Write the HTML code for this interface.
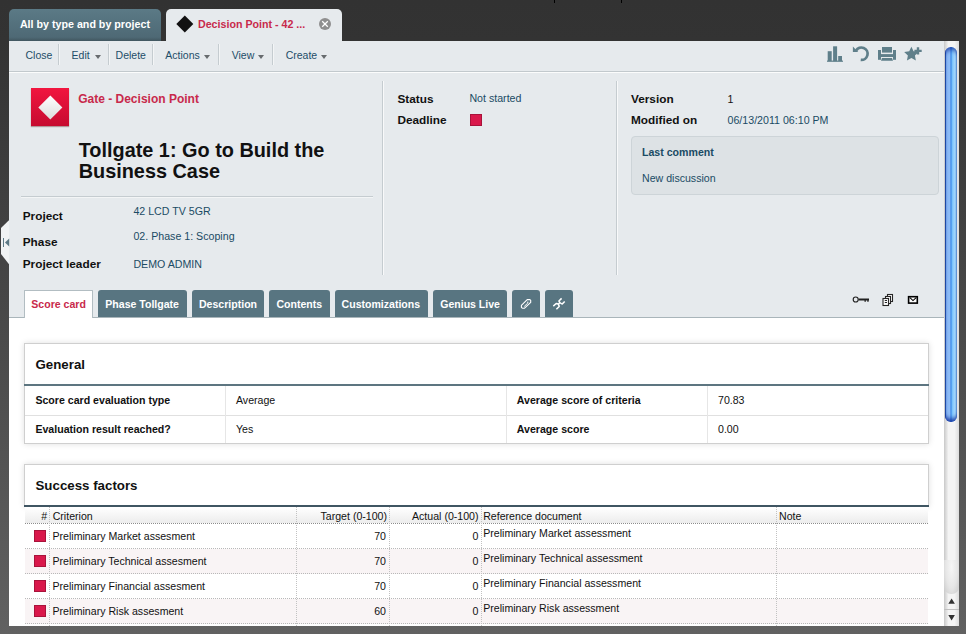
<!DOCTYPE html>
<html><head><meta charset="utf-8">
<style>
*{margin:0;padding:0;box-sizing:border-box}
html,body{width:966px;height:634px;overflow:hidden}
body{position:relative;font-family:"Liberation Sans",sans-serif;background:linear-gradient(#323232 0,#333333 41px,#616161 634px);}
.a{position:absolute;white-space:nowrap;line-height:1}
.b{font-weight:bold}
.lk{color:#1a4b64}
#tab1{left:9px;top:9px;width:152px;height:32px;border-radius:5px 5px 0 0;background:linear-gradient(#5b7a86,#4e6975 88%,#41565f)}
#tab2{left:166px;top:9px;width:176px;height:32px;border-radius:5px 5px 0 0;background:#e6eaed}
#toolbar{left:9px;top:41px;width:935px;height:31px;background:#e6eaed;border-bottom:1px solid #c2c9cd}
#header{left:9px;top:72px;width:935px;height:246px;background:#e6eaed;border-top:1px solid #fbfcfc}
.sep{position:absolute;top:44px;width:2px;height:21px;border-left:1px solid #c5ccd0;border-right:1px solid #f3f5f6}
.tb{font-size:10.5px;color:#1d4d68}
.arr{position:absolute;width:0;height:0;border-left:3.8px solid transparent;border-right:3.8px solid transparent;border-top:4.2px solid #676b6e}
.ctab{position:absolute;top:290px;height:27px;background:#587581;border-radius:3px 3px 0 0}
.ctt{font-size:10.55px;font-weight:bold;color:#fff}
#content{left:9px;top:318px;width:935px;height:308px;background:#fff}
.panel{position:absolute;left:24px;width:905px;border:1px solid #cfcfcf;box-shadow:0 0 6px rgba(0,0,0,.13);background:#fff}
.lbl{font-size:10.6px;font-weight:bold;color:#111}
.val{font-size:10.6px;color:#111}
.hl{position:absolute;height:1px;background:#e0e0e0}
.vl{position:absolute;width:1px;background:#e6e6e6}
.dh{position:absolute;height:1px;background-image:linear-gradient(to right,#8c8c8c 50%,transparent 50%);background-size:2px 1px}
.dv{position:absolute;width:1px;background-image:linear-gradient(#c2c2c2 50%,transparent 50%);background-size:1px 2px}
.dh2{position:absolute;height:1px;background-image:linear-gradient(to right,#b8b8b8 50%,transparent 50%);background-size:2px 1px}
.sq{position:absolute;width:12px;height:12px;background:#d9184b;border:1px solid #a8123a}
.td{font-size:10.6px;color:#111}
</style></head><body>

<!-- top tabs -->
<div class="a" style="left:554px;top:0;width:1px;height:3px;background:#000"></div><div class="a" style="left:621px;top:0;width:1px;height:3px;background:#000"></div>
<div class="a" id="tab1"></div>
<div class="a b" style="left:19.9px;top:18.6px;font-size:10.7px;color:#fff">All by type and by project</div>
<div class="a" id="tab2"></div>
<div class="a" style="left:179.2px;top:17.9px;width:11.6px;height:11.6px;background:#111;transform:rotate(45deg)"></div>
<div class="a b" style="left:198px;top:18.6px;font-size:10.66px;color:#c8294b">Decision Point - 42 ...</div>
<div class="a" style="left:319px;top:17.7px;width:12px;height:12px;border-radius:50%;background:#8f8f8f"></div>
<svg class="a" style="left:319px;top:17.7px" width="12" height="12" viewBox="0 0 12 12"><path d="M3.2 3.2L8.8 8.8M8.8 3.2L3.2 8.8" stroke="#fff" stroke-width="1.25"/></svg>

<!-- toolbar -->
<div class="a" id="toolbar"></div>
<div class="a tb" style="left:25.5px;top:50.1px">Close</div>
<div class="sep" style="left:58px"></div>
<div class="a tb" style="left:71.6px;top:50.1px">Edit</div>
<div class="arr" style="left:95.1px;top:54.8px"></div>
<div class="sep" style="left:108px"></div>
<div class="a tb" style="left:115.6px;top:50.1px">Delete</div>
<div class="sep" style="left:152px"></div>
<div class="a tb" style="left:165.3px;top:50.1px">Actions</div>
<div class="arr" style="left:204.4px;top:54.8px"></div>
<div class="sep" style="left:218px"></div>
<div class="a tb" style="left:231.7px;top:50.1px">View</div>
<div class="arr" style="left:258.4px;top:54.8px"></div>
<div class="sep" style="left:272px"></div>
<div class="a tb" style="left:285.7px;top:50.1px">Create</div>
<div class="arr" style="left:321.3px;top:54.8px"></div>

<!-- toolbar right icons -->
<svg class="a" style="left:826px;top:45px" width="100" height="18" viewBox="826 45 100 18">
 <g fill="#5f7f8a">
  <rect x="827.7" y="51.2" width="4" height="10"/>
  <rect x="833.1" y="46.3" width="4" height="15"/>
  <rect x="838.2" y="56" width="3.8" height="5.2"/>
  <rect x="827" y="60.6" width="16" height="1.2"/>
 </g>
 <path d="M856.03 50.60 A6.2 6.2 0 1 1 860.75 59.87" fill="none" stroke="#5f7f8a" stroke-width="2.7"/>
 <path d="M852.9 46.6 L852.9 51.9 L858.2 51.9 Z" fill="#5f7f8a"/>
 <g fill="#5f7f8a">
  <rect x="882" y="47" width="10" height="5.6"/>
  <rect x="878" y="50" width="3" height="9.8"/>
  <rect x="893" y="50" width="3" height="9.8"/>
  <rect x="878" y="54.1" width="18" height="2.9"/>
  <path d="M882 57.9 H892 L893 60.8 H881 Z"/>
 </g>
 <path d="M911.40 46.75 L913.57 51.36 L918.63 52.00 L914.92 55.49 L915.87 60.50 L911.40 58.05 L906.93 60.50 L907.88 55.49 L904.17 52.00 L909.23 51.36 Z" fill="#5f7f8a"/>
 <path d="M918 47.3 V54.6 M914.4 50.9 H921.7" stroke="#5f7f8a" stroke-width="2.4"/>
</svg>

<!-- header -->
<div class="a" id="header"></div>
<div class="a" style="left:31px;top:88px;width:38px;height:38px;background:linear-gradient(#f1163f,#c60b30);box-shadow:0 1px 1px rgba(80,0,0,.35)"></div>
<div class="a" style="left:42px;top:98.7px;width:16.7px;height:16.7px;background:linear-gradient(135deg,#ffffff,#dcdcdc);transform:rotate(45deg)"></div>
<div class="a b" style="left:78.2px;top:92.5px;font-size:12px;color:#c8294b">Gate - Decision Point</div>
<div class="a b" style="left:78.7px;font-size:19.87px;color:#111;line-height:21.6px;top:139.5px">Tollgate 1: Go to Build the<br>Business Case</div>
<div class="a" style="left:21px;top:196px;width:352px;height:2px;border-top:1px solid #c5ccd0;border-bottom:1px solid #f3f5f6"></div>
<div class="a b" style="left:22.75px;top:211px;font-size:11.8px;color:#111">Project</div>
<div class="a b" style="left:22.75px;top:236.6px;font-size:11.8px;color:#111">Phase</div>
<div class="a b" style="left:22.75px;top:258.6px;font-size:11.8px;color:#111">Project leader</div>
<div class="a lk" style="left:133.4px;top:205.9px;font-size:10.65px">42 LCD TV 5GR</div>
<div class="a lk" style="left:133.4px;top:231px;font-size:10.65px">02. Phase 1: Scoping</div>
<div class="a lk" style="left:133.4px;top:258.7px;font-size:10.65px">DEMO ADMIN</div>
<div class="a" style="left:382px;top:81px;width:2px;height:194px;border-left:1px solid #c5ccd0;border-right:1px solid #f8f9fa"></div>
<div class="a b" style="left:397.4px;top:93.6px;font-size:11.8px;color:#111">Status</div>
<div class="a lk" style="left:469.4px;top:92.8px;font-size:10.65px">Not started</div>
<div class="a b" style="left:397.4px;top:114.6px;font-size:11.8px;color:#111">Deadline</div>
<div class="sq" style="left:470px;top:114px"></div>
<div class="a" style="left:616px;top:81px;width:2px;height:194px;border-left:1px solid #c5ccd0;border-right:1px solid #f8f9fa"></div>
<div class="a b" style="left:631px;top:93.6px;font-size:11.8px;color:#111">Version</div>
<div class="a" style="left:727.5px;top:93.7px;font-size:10.65px;color:#111">1</div>
<div class="a b" style="left:631px;top:114.6px;font-size:11.8px;color:#111">Modified on</div>
<div class="a lk" style="left:727.5px;top:114.8px;font-size:10.65px">06/13/2011 06:10 PM</div>
<div class="a" style="left:631px;top:136px;width:308px;height:59px;border-radius:4px;background:#dde2e5;border:1px solid #cdd4d8"></div>
<div class="a b lk" style="left:642px;top:147px;font-size:10.6px">Last comment</div>
<div class="a lk" style="left:642px;top:173px;font-size:10.6px">New discussion</div>

<!-- content tabs -->
<div class="a" style="left:9px;top:317px;width:935px;height:1px;background:#a9b5ba"></div>
<div class="ctab" style="left:24px;width:69px;background:#fff;border:1px solid #b2bdc2;border-bottom:none;height:28px;border-radius:1px 1px 0 0"></div>
<div class="a ctt" style="left:31.3px;top:298.9px;color:#c8294b">Score card</div>
<div class="ctab" style="left:98.4px;width:88.4px"></div>
<div class="a ctt" style="left:105.3px;top:298.9px">Phase Tollgate</div>
<div class="ctab" style="left:192px;width:72px"></div>
<div class="a ctt" style="left:199px;top:298.9px">Description</div>
<div class="ctab" style="left:269px;width:61.2px"></div>
<div class="a ctt" style="left:276.4px;top:298.9px">Contents</div>
<div class="ctab" style="left:335px;width:93px"></div>
<div class="a ctt" style="left:341.6px;top:298.9px">Customizations</div>
<div class="ctab" style="left:433.3px;width:73.7px"></div>
<div class="a ctt" style="left:440.2px;top:298.9px">Genius Live</div>
<div class="ctab" style="left:512.4px;width:27.2px"></div>
<div class="ctab" style="left:545px;width:28.2px"></div>
<svg class="a" style="left:512px;top:290px" width="62" height="27" viewBox="512 290 62 27">
 <path d="M527.2 299.6 L529.9 299.6 L530.7 300.4 L530.7 302.4 L524.6 308.2 L522.3 308.2 L521.4 307.3 L521.4 305.4 Z" fill="none" stroke="#fff" stroke-width="1.1" stroke-linejoin="round"/>
 <path d="M527.8 301.6 L527.8 303 L524.2 306.5" fill="none" stroke="#fff" stroke-width="1"/>
 <path d="M561.6 298.4 L558.9 301 Q559.4 303.2 562.2 304.1 L564.7 301.4 M553.3 306.1 L556.2 303.5 Q558.9 303.6 559.2 306.4 L556.4 309.3 M560 302.6 L558.2 304.2" fill="none" stroke="#fff" stroke-width="1.5" stroke-linejoin="round"/>
</svg>

<!-- tab-row right icons -->
<svg class="a" style="left:850px;top:290px" width="72" height="18" viewBox="850 290 72 18">
 <circle cx="855.7" cy="299.5" r="2.5" fill="none" stroke="#222" stroke-width="1.15"/>
 <rect x="858.5" y="298.5" width="10.5" height="2" fill="#222"/>
 <rect x="864.5" y="299" width="1.3" height="2.8" fill="#222"/>
 <rect x="867.3" y="299" width="1.3" height="2.8" fill="#222"/>
 <g fill="#fcfcfc" stroke="#262626" stroke-width="1.1">
  <rect x="887.5" y="294.5" width="5" height="7"/>
  <rect x="885.5" y="296.5" width="5" height="7"/>
  <rect x="883" y="298.5" width="5.5" height="7"/>
 </g>
 <path d="M884.8 300.5 H887 M884.8 302.5 H887" stroke="#262626" stroke-width="1"/>
 <rect x="908.6" y="296.7" width="8.7" height="6.4" fill="#fff" stroke="#000" stroke-width="1.6"/>
 <path d="M909.9 297.7 L913 300.6 L916.2 297.7" fill="none" stroke="#000" stroke-width="1.1"/>
</svg>

<!-- left notch -->
<svg class="a" style="left:0;top:219px" width="10" height="47" viewBox="0 219 10 47"><path d="M9.2 220 L1 228 L1 254 L9.2 264.5 Z" fill="#f1f3f4"/><rect x="3" y="238" width="1" height="9" fill="#5d7985"/><path d="M9.2 238.5 L5 242.5 L9.2 246.5 Z" fill="#5d7985"/></svg>
<!-- content -->
<div class="a" id="content"></div>

<!-- General panel -->
<div class="panel" style="top:343px;height:101px"></div>
<div class="a b" style="left:35.5px;top:357.6px;font-size:13.3px;color:#111">General</div>
<div class="a" style="left:24px;top:384px;width:905px;height:2px;background:#5d7580"></div>
<div class="hl" style="left:25px;top:415px;width:903px"></div>
<div class="vl" style="left:225px;top:386px;height:57px"></div>
<div class="vl" style="left:506px;top:386px;height:57px"></div>
<div class="vl" style="left:707px;top:386px;height:57px"></div>
<div class="a lbl" style="left:35.4px;top:395px">Score card evaluation type</div>
<div class="a val" style="left:236px;top:395px">Average</div>
<div class="a lbl" style="left:516.8px;top:395px">Average score of criteria</div>
<div class="a val" style="left:718px;top:395px">70.83</div>
<div class="a lbl" style="left:35.4px;top:424px">Evaluation result reached?</div>
<div class="a val" style="left:236px;top:424px">Yes</div>
<div class="a lbl" style="left:516.8px;top:424px">Average score</div>
<div class="a val" style="left:718px;top:424px">0.00</div>

<!-- Success factors panel -->
<div class="panel" style="top:464px;height:43px;border-bottom:none"></div>
<div class="a b" style="left:35.5px;top:479px;font-size:13.3px;color:#111">Success factors</div>
<div class="a" style="left:24px;top:505px;width:905px;height:2px;background:#3f5562"></div>
<div class="a" style="left:25px;top:507px;width:903px;height:16px;background:linear-gradient(#ffffff,#ececec)"></div>
<div class="a" style="left:25px;top:548.5px;width:903px;height:25px;background:#f9f4f5"></div>
<div class="a" style="left:25px;top:598.5px;width:903px;height:25px;background:#f9f4f5"></div>
<div class="dh" style="left:25px;top:523px;width:903px"></div>
<div class="dh2" style="left:25px;top:548px;width:903px"></div>
<div class="dh2" style="left:25px;top:573px;width:903px"></div>
<div class="dh2" style="left:25px;top:598px;width:903px"></div>
<div class="dh2" style="left:25px;top:623px;width:903px"></div>
<div class="dv" style="left:49px;top:507px;height:119px"></div>
<div class="dv" style="left:296px;top:507px;height:119px"></div>
<div class="dv" style="left:389px;top:507px;height:119px"></div>
<div class="dv" style="left:481px;top:507px;height:119px"></div>
<div class="dv" style="left:776px;top:507px;height:119px"></div>
<div class="a td" style="left:41.3px;top:510.6px">#</div>
<div class="a td" style="left:52.7px;top:510.6px">Criterion</div>
<div class="a td" style="left:320.5px;top:510.6px">Target (0-100)</div>
<div class="a td" style="left:412px;top:510.6px">Actual (0-100)</div>
<div class="a td" style="left:483.2px;top:510.6px">Reference document</div>
<div class="a td" style="left:779px;top:510.6px">Note</div>

<div class="sq" style="left:34px;top:530px"></div>
<div class="a td" style="left:52.5px;top:530.8px">Preliminary Market assesment</div>
<div class="a td" style="right:580px;top:530.5px">70</div>
<div class="a td" style="right:487.5px;top:530.5px">0</div>
<div class="a td" style="left:483.2px;top:528.2px">Preliminary Market assessment</div>

<div class="sq" style="left:34px;top:555px"></div>
<div class="a td" style="left:52.5px;top:555.8px">Preliminary Technical assesment</div>
<div class="a td" style="right:580px;top:555.5px">70</div>
<div class="a td" style="right:487.5px;top:555.5px">0</div>
<div class="a td" style="left:483.2px;top:553.2px">Preliminary Technical assessment</div>

<div class="sq" style="left:34px;top:580px"></div>
<div class="a td" style="left:52.5px;top:580.8px">Preliminary Financial assesment</div>
<div class="a td" style="right:580px;top:580.5px">70</div>
<div class="a td" style="right:487.5px;top:580.5px">0</div>
<div class="a td" style="left:483.2px;top:578.2px">Preliminary Financial assessment</div>

<div class="sq" style="left:34px;top:605px"></div>
<div class="a td" style="left:52.5px;top:605.8px">Preliminary Risk assesment</div>
<div class="a td" style="right:580px;top:605.5px">60</div>
<div class="a td" style="right:487.5px;top:605.5px">0</div>
<div class="a td" style="left:483.2px;top:603.2px">Preliminary Risk assessment</div>

<!-- scrollbar -->
<div class="a" style="left:944px;top:41px;width:15px;height:585px;background:linear-gradient(to right,#c8c8c8,#f4f4f4 30%,#f4f4f4 70%,#dcdcdc)"></div>
<div class="a" style="left:944.6px;top:47px;width:12.8px;height:375px;border-radius:6.4px;box-shadow:inset 0 -5px 4px -2px rgba(10,40,150,.85), inset 0 5px 4px -2px rgba(10,40,150,.7);background:linear-gradient(to right,#1a3d85 0%,#2b5cb8 6%,#88b7f4 13%,#8ebcf6 38%,#3f8ce9 50%,#7cc3fb 62%,#a7dcff 82%,#94cdf9 92%,#4f8ad2 100%)"></div>
<div class="a" style="left:944px;top:609px;width:15px;height:1px;background:#c0c0c0"></div>
<div class="a" style="left:944px;top:560px;width:15px;height:33.5px;border-radius:0 0 7px 7px;background:radial-gradient(ellipse at 50% 20%,#f6f6f6 0,#e6e6e6 55%,#c9c9c9 100%)"></div>
<svg class="a" style="left:944px;top:596px" width="15" height="30" viewBox="0 0 15 30"><path d="M4.3 7.8 L7.6 2.4 L10.9 7.8Z M4.3 19 L10.9 19 L7.6 24.6Z" fill="#333"/></svg>
</body></html>
